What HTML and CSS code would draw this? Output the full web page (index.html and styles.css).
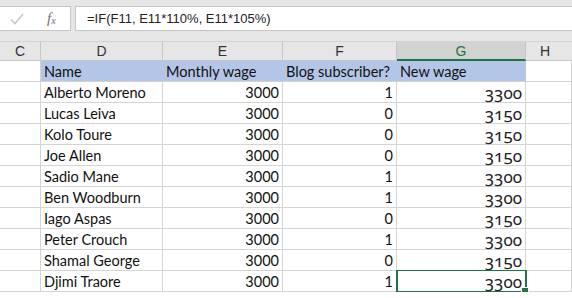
FILE: index.html
```html
<!DOCTYPE html>
<html lang="en">
<head>
    <meta charset="UTF-8">
    <title>Wage sheet</title>
    <link rel="stylesheet" href="styles.css">
</head>
<body>
    <div class="formula-bar">
        <div class="buttons">
            <svg class="check" width="14" height="12" viewBox="0 0 14 12">
                <path d="M1 6.5 L5 10.5 L13 1" fill="none" stroke="#c8c8c8" stroke-width="1.6"/>
            </svg>
            <span class="fx">f<sub>x</sub></span>
        </div>
        <div class="formula">=IF(F11, E11*110%, E11*105%)</div>
    </div>

    <div class="sheet">
        <div class="colhead">C</div>
        <div class="colhead">D</div>
        <div class="colhead">E</div>
        <div class="colhead">F</div>
        <div class="colhead active">G</div>
        <div class="colhead last">H</div>

        <div class="cell"></div>
        <div class="cell title">Name</div>
        <div class="cell title">Monthly wage</div>
        <div class="cell title">Blog subscriber?</div>
        <div class="cell title">New wage</div>
        <div class="cell"></div>
    </div>
    <div class="sheet" id="rows"></div>

    <script>
        const people = [
            ['Alberto Moreno', 1], ['Lucas Leiva', 0], ['Kolo Toure', 0],
            ['Joe Allen', 0], ['Sadio Mane', 1], ['Ben Woodburn', 1],
            ['Iago Aspas', 0], ['Peter Crouch', 1], ['Shamal George', 0],
            ['Djimi Traore', 1]
        ];
        const rows = document.getElementById('rows');
        people.forEach(([name, sub], i) => {
            const wage = 3000;
            const newWage = sub ? wage * 1.1 : wage * 1.05;
            const last = i === people.length - 1;
            rows.innerHTML += `
                <div class="cell"></div>
                <div class="cell">${name}</div>
                <div class="cell num">${wage}</div>
                <div class="cell num">${sub}</div>
                <div class="cell num serif${last ? ' selected' : ''}">${Math.round(newWage)}</div>
                <div class="cell"></div>`;
        });
    </script>
</body>
</html>
```

FILE: styles.css
```css
body {
    margin: 0;
    background: #ffffff;
    font-family: "Liberation Sans", Arial, sans-serif;
    overflow: hidden;
}
.formula-bar {
    display: flex;
    gap: 4px;
    padding: 6px 0 10px 0;
    background: #e6e6e6;
    border-bottom: 1px solid #d4d4d4;
}
.buttons {
    width: 70px;
    height: 23px;
    background: #ffffff;
    border: 1px solid #c6c6c6;
    border-left: none;
    display: flex;
    align-items: center;
}
.check {
    margin-left: 10px;
}
.fx {
    margin-left: 23px;
    font-family: "Liberation Serif", serif;
    font-style: italic;
    font-size: 15px;
    color: #707070;
}
.fx sub {
    font-size: 10px;
    vertical-align: -1px;
}
.formula {
    flex: 1;
    height: 23px;
    background: #ffffff;
    border: 1px solid #c6c6c6;
    border-right: none;
    padding-left: 11px;
    font-size: 13px;
    line-height: 23px;
    color: #222222;
}
.sheet {
    display: grid;
    grid-template-columns: 41px 122px 120px 114px 129px 1fr;
}
.colhead {
    height: 18px;
    background: #e6e6e6;
    border-right: 1px solid #c6c6c6;
    border-bottom: 1px solid #c6c6c6;
    text-align: center;
    font-size: 14px;
    line-height: 19px;
    color: #333333;
}
.colhead.active {
    background: #d2d2d2;
    color: #217346;
    border-bottom: 2px solid #217346;
    height: 17px;
}
.colhead.last {
    border-right: none;
    text-align: left;
    padding-left: 14px;
}
.cell {
    position: relative;
    height: 20px;
    border-right: 1px solid #d4d4d4;
    border-bottom: 1px solid #d4d4d4;
    padding: 0 3px;
    font-family: Lato, "Liberation Sans", sans-serif;
    font-size: 14.5px;
    line-height: 21px;
    color: #111111;
    white-space: nowrap;
}
.cell.title {
    background: #b4c6e7;
    border-right-color: #b4c6e7;
}
.cell.num {
    text-align: right;
}
.cell.serif {
    font-family: "Noto Sans", sans-serif;
    font-variant-numeric: oldstyle-nums;
    font-size: 17px;
    color: #222222;
}
.cell.selected {
    z-index: 1;
    border-color: #217346;
    box-shadow: 0 0 0 1px #217346, inset 1px 0 0 #217346;
}
.cell.selected::after {
    content: "";
    position: absolute;
    right: -4px;
    bottom: -4px;
    width: 6px;
    height: 6px;
    background: #217346;
    border: 1px solid #ffffff;
}
```
